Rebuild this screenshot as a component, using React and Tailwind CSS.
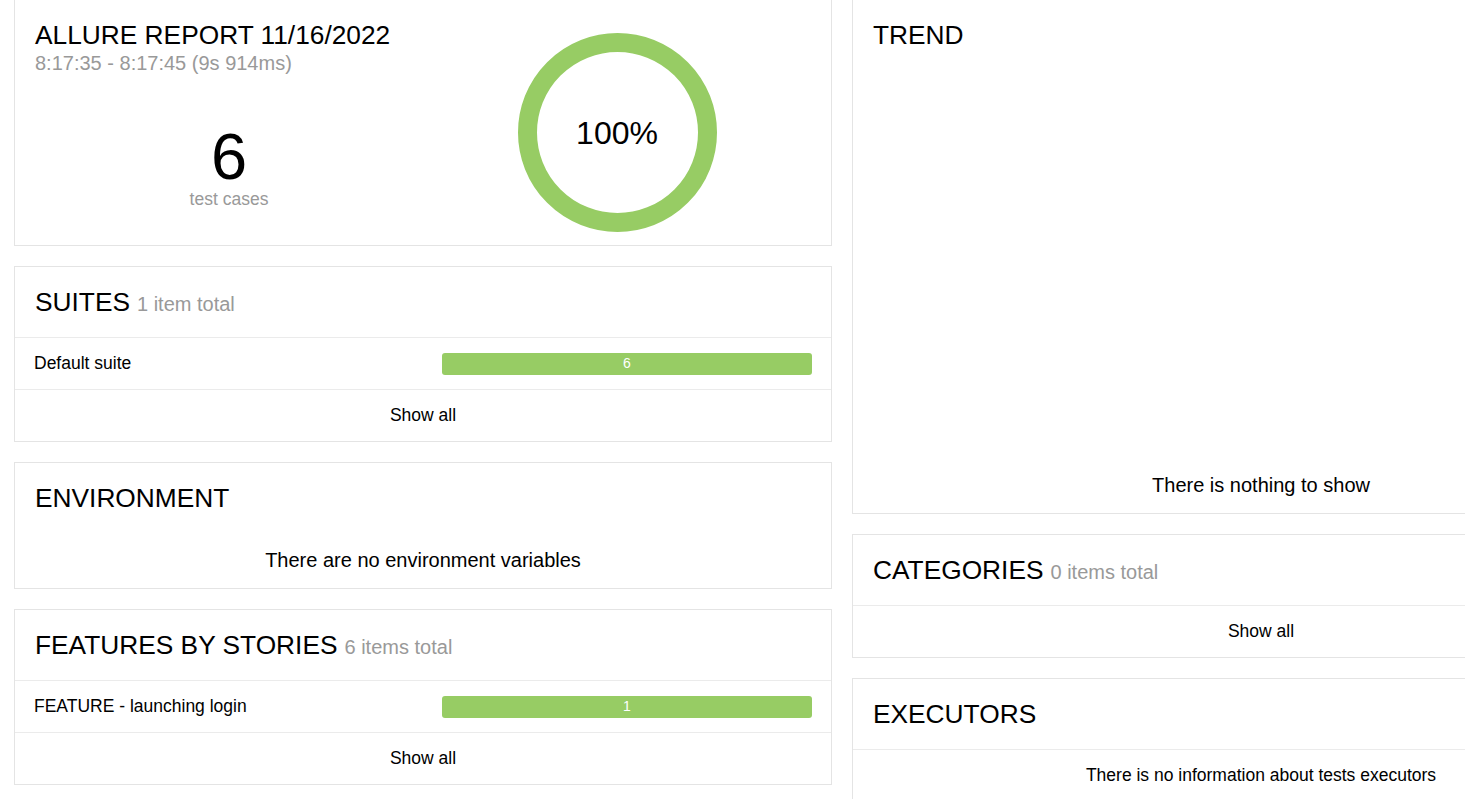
import React from "react";

const GREEN = "#97cc64";

const Card = ({ children, noTop }) => (
  <div className={`bg-white border border-[#e4e4e4] ${noTop ? "border-t-0" : ""}`}>
    {children}
  </div>
);

const Title = ({ text, count }) => (
  <div className="h-[70px] px-5 pt-5">
    <h2 className="text-[26.3px] leading-[30px] font-normal text-black whitespace-nowrap">
      {text}
      {count && <span className="text-[20px] text-[#999] ml-[7px]">{count}</span>}
    </h2>
  </div>
);

const BarRow = ({ name, value }) => (
  <div className="border-t border-[#ebebeb] h-[52px] px-5 flex items-center justify-between">
    <span className="text-[17.5px] text-black -ml-px">{name}</span>
    <div
      className="w-[370px] h-[22px] rounded-[3px] flex items-center justify-center text-[14px] text-white -mr-px"
      style={{ backgroundColor: GREEN }}
    >
      {value}
    </div>
  </div>
);

const ShowAll = () => (
  <div className="border-t border-[#ebebeb] h-[52px] flex items-center justify-center text-[17.5px] text-black">
    Show all
  </div>
);

const Donut = () => (
  <div className="relative w-[199px] h-[199px]">
    <svg width="199" height="199" viewBox="0 0 199 199">
      <circle cx="99.5" cy="99.5" r="90" fill="none" stroke={GREEN} strokeWidth="19" />
    </svg>
    <div className="absolute inset-0 flex items-center justify-center text-[32px] text-black">
      100%
    </div>
  </div>
);

export default function App() {
  return (
    <div
      className="w-full h-[799px] overflow-hidden bg-white"
      style={{ fontFamily: '"Liberation Sans", Arial, sans-serif' }}
    >
      <div className="pl-[14px] flex gap-[20px] items-start w-[1684px]">
        {/* left column */}
        <div className="w-[818px] flex flex-col gap-[20px]">
          <Card noTop>
            <div className="flex h-[245px] px-5">
              <div className="flex-1 flex flex-col">
                <h1 className="pt-5 text-[26.3px] leading-[30px] font-normal text-black whitespace-nowrap">
                  ALLURE REPORT 11/16/2022
                </h1>
                <div className="mt-[2px] text-[20px] leading-[23px] text-[#999] whitespace-nowrap">
                  8:17:35 - 8:17:45 (9s 914ms)
                </div>
                <div className="mt-[50px] flex flex-col items-center">
                  <div className="text-[65px] leading-[64px] text-black">6</div>
                  <div className="text-[17.5px] leading-[20px] text-[#999]">test cases</div>
                </div>
              </div>
              <div className="flex-1 flex justify-center pt-[33px]">
                <Donut />
              </div>
            </div>
          </Card>

          <Card>
            <Title text="SUITES" count="1 item total" />
            <BarRow name="Default suite" value="6" />
            <ShowAll />
          </Card>

          <Card>
            <Title text="ENVIRONMENT" />
            <div className="h-[55px] flex items-center justify-center text-[20px] text-black pb-[2px]">
              There are no environment variables
            </div>
          </Card>

          <Card>
            <Title text="FEATURES BY STORIES" count="6 items total" />
            <BarRow name="FEATURE - launching login" value="1" />
            <ShowAll />
          </Card>
        </div>

        {/* right column */}
        <div className="w-[818px] flex flex-col gap-[20px]">
          <Card noTop>
            <Title text="TREND" />
            <div className="h-[443px] flex flex-col justify-end items-center pb-[13px] text-[20px] text-black">
              There is nothing to show
            </div>
          </Card>

          <Card>
            <Title text="CATEGORIES" count="0 items total" />
            <ShowAll />
          </Card>

          <Card>
            <Title text="EXECUTORS" />
            <div className="border-t border-[#ebebeb] h-[52px] flex items-center justify-center text-[17.5px] text-black">
              There is no information about tests executors
            </div>
          </Card>
        </div>
      </div>
    </div>
  );
}
